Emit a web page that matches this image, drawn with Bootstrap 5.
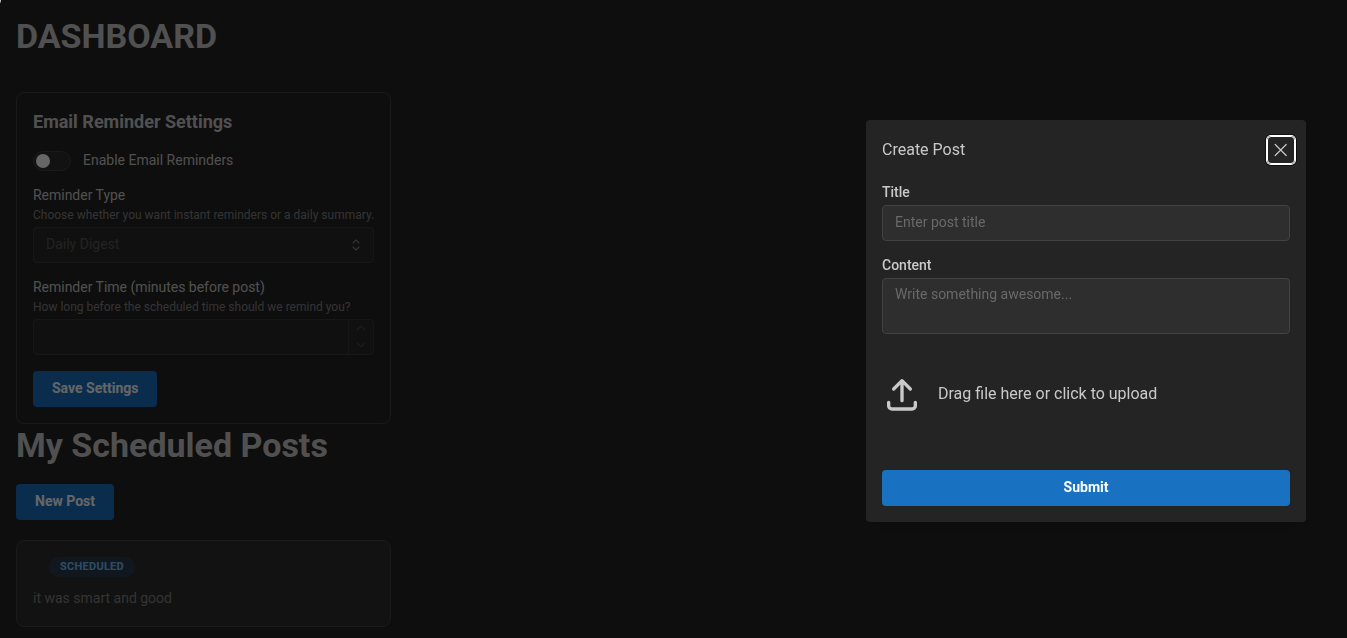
<!DOCTYPE html>
<html lang="en" data-bs-theme="dark">
<head>
<meta charset="utf-8">
<meta name="viewport" content="width=device-width, initial-scale=1">
<title>Dashboard</title>
<link href="https://cdn.jsdelivr.net/npm/bootstrap@5.3.0/dist/css/bootstrap.min.css" rel="stylesheet">
<style>
  body { background: #242424; color: #c9c9c9; font: 400 14px/1.45 Roboto, "Liberation Sans", sans-serif; height: 100vh; overflow: hidden; }
  .page-title { font-size: 34px; line-height: 42px; padding-bottom: 2.2px; font-weight: 700; color: #c9c9c9; margin: 0; }
  .page-title.first { line-height: 40px; padding-bottom: 4.2px; }
  .panel { width: 375px; border: 1px solid #424242; border-radius: 8px; padding: 16px; }
  .settings { margin-top: 32px; }
  .post { margin-top: 20px; background: #2e2e2e; height: 87px; }
  .post-text { color: #828282; margin-top: 11px; }
  .panel-title { font-size: 18px; line-height: 25.2px; font-weight: 700; margin: 0; color: #c9c9c9; }
  .field-label { display: block; font-size: 14px; line-height: 20.3px; font-weight: 500; margin: 0; color: #c9c9c9; }
  .panel .field-label { line-height: 17px; padding-bottom: 4px; font-weight: 450; letter-spacing: -.02px; }
  .hint { font-size: 12px; line-height: 14.4px; color: #828282; margin: 0 0 4.3px; white-space: nowrap; }
  .switch-row { height: 20.8px; }
  .switch-row span { padding-bottom: 2px; }
  .track { width: 38px; height: 20px; border: 1px solid #424242; border-radius: 10px; background: #2e2e2e; padding-left: 2px; }
  .thumb { width: 14px; height: 14px; border-radius: 50%; background: #fff; }
  .btn-main { --bs-btn-bg: #1971c2; --bs-btn-color: #fff; --bs-btn-hover-bg: #1864ab; --bs-btn-hover-color: #fff; border: 0; height: 36px; padding: 0 19px 2px; border-radius: 4px; font-size: 14px; font-weight: 700; line-height: 1; }
  .box { height: 36px; border: 1px solid #3b3b3b; border-radius: 4px; background: #2a2a2a; color: #585858; line-height: 32px; padding-left: 12px; }
  .sorter { margin-right: 3px; }
  .stepper { width: 25px; border-left: 1px solid #3b3b3b; }
  .tag { height: 20px; border-radius: 10px; background: #2b3b4c; color: #74c0fc; font-size: 11px; font-weight: 700; line-height: 19px; width: 86px; text-align: center; letter-spacing: .25px; margin-left: 16px; }
  .shade { --bs-backdrop-opacity: 1; background: rgba(0,0,0,.6); }
  .modal-dialog.post-dialog { width: 440px; max-width: none; margin: 120px 41px 0 auto; }
  .post-dialog .modal-content { background: #242424; color: #c9c9c9; border: 0; border-radius: 4px; height: 402px; box-shadow: 0 1px 3px rgba(0,0,0,.05), 0 28px 23px -7px rgba(0,0,0,.05), 0 12px 12px -7px rgba(0,0,0,.04); }
  .post-dialog .modal-header { height: 60px; padding: 0 11px 0 16px; border: 0; }
  .post-dialog .modal-title { font-size: 16px; line-height: 24px; font-weight: 400; color: #c9c9c9; }
  .close-x { width: 28px; height: 28px; padding: 0; border: 1px solid #fff; border-radius: 4px; background: none; color: #c9c9c9; box-shadow: 0 0 0 1px #fff, 0 0 0 2px #101010; }
  .post-dialog .form-control { background: #2e2e2e; border: 1px solid #424242; border-radius: 4px; color: #c9c9c9; font-size: 14px; padding: 0 12px; resize: none; box-shadow: none; }
  .post-dialog .form-control::placeholder { color: #696969; opacity: 1; }
  .post-dialog input.form-control { height: 36px; padding-bottom: 2px; }
  .post-dialog textarea.form-control { height: 56px; padding-top: 5px; line-height: 21.7px; }
  .post-dialog .field-label { line-height: 21px; margin-bottom: 2px; }
  .post-dialog .modal-body { padding-top: 2px; }
  .content-field { margin-top: 14px; }
  .drop { height: 120px; font-size: 16px; }
  .corner { position: fixed; z-index: 2000; left: 0; top: 0; width: 1px; height: 3px; background: linear-gradient(#ddd, #555); }
</style>
</head>
<body>
<div class="corner"></div>
<main class="d-flex flex-column align-items-start p-3">
  <h1 class="page-title first">DASHBOARD</h1>
  <section class="panel settings d-flex flex-column gap-3">
    <h3 class="panel-title">Email Reminder Settings</h3>
    <div class="switch-row d-flex align-items-center">
      <div class="track d-flex align-items-center"><div class="thumb"></div></div>
      <span class="ms-2 ps-1">Enable Email Reminders</span>
    </div>
    <div>
      <label class="field-label">Reminder Type</label>
      <p class="hint">Choose whether you want instant reminders or a daily summary.</p>
      <div class="box d-flex justify-content-between pe-2">
        <span>Daily Digest</span>
        <svg class="sorter align-self-center" width="12" height="16" viewBox="0 0 12 16" fill="none" stroke="#828282" stroke-width="1.1" stroke-linecap="round" stroke-linejoin="round"><path d="M3 6l3-3 3 3M3 10l3 3 3-3"/></svg>
      </div>
    </div>
    <div>
      <label class="field-label">Reminder Time (minutes before post)</label>
      <p class="hint">How long before the scheduled time should we remind you?</p>
      <div class="box d-flex justify-content-end">
        <div class="stepper d-flex flex-column justify-content-around align-items-center">
          <svg width="10" height="6" viewBox="0 0 10 6" fill="none" stroke="#555" stroke-linecap="round"><path d="M1.2 4.8L5 1.2l3.8 3.6"/></svg>
          <svg width="10" height="6" viewBox="0 0 10 6" fill="none" stroke="#555" stroke-linecap="round"><path d="M1.2 1.2L5 4.8l3.8-3.6"/></svg>
        </div>
      </div>
    </div>
    <button class="btn btn-main align-self-start" type="button">Save Settings</button>
  </section>
  <h1 class="page-title">My Scheduled Posts</h1>
  <button class="btn btn-main mt-3" type="button">New Post</button>
  <section class="panel post d-flex flex-column align-items-start">
    <span class="tag">SCHEDULED</span>
    <span class="post-text">it was smart and good</span>
  </section>
</main>

<div class="modal-backdrop show shade"></div>
<div class="modal d-block" tabindex="-1" role="dialog">
  <div class="modal-dialog post-dialog">
    <div class="modal-content">
      <div class="modal-header d-flex justify-content-between align-items-center">
        <h2 class="modal-title">Create Post</h2>
        <button class="close-x d-flex align-items-center justify-content-center" type="button" aria-label="Close">
          <svg width="14" height="14" viewBox="0 0 14 14" fill="none" stroke="currentColor" stroke-width="1.2" stroke-linecap="round"><path d="M1.2 1.5l11 11M12.2 1.5l-11 11"/></svg>
        </button>
      </div>
      <div class="modal-body d-flex flex-column px-3 pb-3">
        <div>
          <label class="field-label" for="t">Title</label>
          <input id="t" class="form-control" placeholder="Enter post title">
        </div>
        <div class="content-field">
          <label class="field-label" for="c">Content</label>
          <textarea id="c" class="form-control" placeholder="Write something awesome..."></textarea>
        </div>
        <div class="drop d-flex align-items-center gap-3">
          <svg width="40" height="40" viewBox="0 0 24 24" fill="none" stroke="#c9c9c9" stroke-width="2" stroke-linecap="round" stroke-linejoin="round"><path d="M4 17v2a2 2 0 0 0 2 2h12a2 2 0 0 0 2-2v-2M7 9l5-5 5 5M12 4v12"/></svg>
          <span>Drag file here or click to upload</span>
        </div>
        <button class="btn btn-main w-100 mt-auto" type="button">Submit</button>
      </div>
    </div>
  </div>
</div>
<script src="https://cdn.jsdelivr.net/npm/bootstrap@5.3.0/dist/js/bootstrap.bundle.min.js"></script>
</body>
</html>
